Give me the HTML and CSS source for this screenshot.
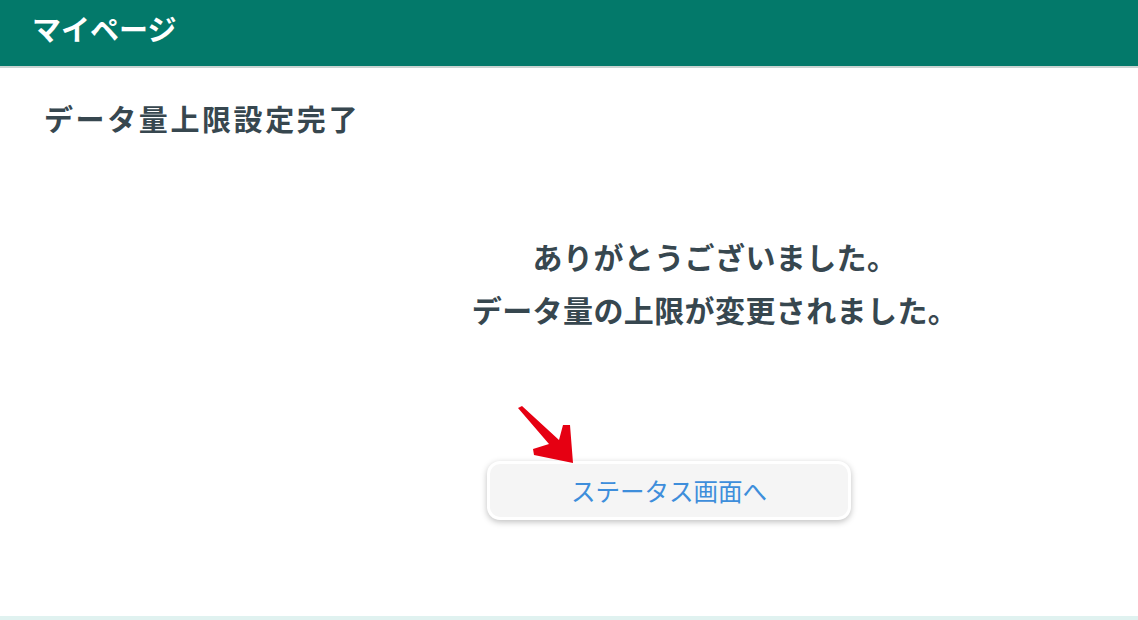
FILE: index.html
```html
<!DOCTYPE html>
<html lang="ja">
<head>
  <meta charset="utf-8">
  <title>マイページ</title>
  <link rel="stylesheet" href="styles.css">
</head>
<body>
  <header class="topbar">
    <h1 class="topbar-title">マイページ</h1>
  </header>

  <main class="page">
    <h2 class="page-title">データ量上限設定完了</h2>

    <div class="message">
      <p>ありがとうございました。</p>
      <p>データ量の上限が変更されました。</p>
    </div>

    <div class="actions">
      <div class="btn-wrap">
        <!-- red pointer arrow -->
        <svg class="pointer" width="60" height="60" viewBox="0 0 60 60">
          <polygon points="1,2 5,0 42,34 46,19 53,19 56,57 17,49 16,43 32,38" fill="#e60012"/>
        </svg>
        <a href="#" class="btn">ステータス画面へ</a>
      </div>
    </div>
  </main>

  <footer class="footer"></footer>
</body>
</html>
```

FILE: styles.css
```css
* {
  box-sizing: border-box;
  margin: 0;
  padding: 0;
}

body {
  width: 1138px;
  height: 620px;
  display: flex;
  flex-direction: column;
  font-family: "Noto Sans CJK JP", "Noto Sans", sans-serif;
  color: #37474f;
  background: #fff;
  overflow: hidden;
}

.topbar {
  height: 68px;
  background-color: #03796a;
  border-bottom: 2px solid #c9d4d2;
  padding: 0 32px;
  display: flex;
  align-items: center;
}
.topbar-title {
  color: #fff;
  font-size: 29px;
  font-weight: 700;
  line-height: 1;
  margin-top: -10px;
}

.page {
  flex: 1;
  display: flex;
  flex-direction: column;
}

.page-title {
  font-size: 29px;
  font-weight: 700;
  letter-spacing: 2.6px;
  padding: 29px 0 0 44px;
  line-height: 42px;
}

.message {
  padding: 91px 0 0 292px;
  text-align: center;
}
.message p {
  font-size: 30px;
  font-weight: 700;
  letter-spacing: 0.4px;
  line-height: 53px;
}

.actions {
  display: flex;
  justify-content: center;
  padding: 125px 0 0 200px;
}
.btn-wrap {
  position: relative;
}
.pointer {
  position: absolute;
  left: 30px;
  top: -55px;
}
.btn {
  display: block;
  width: 364px;
  height: 59px;
  line-height: 53px;
  text-align: center;
  font-size: 24.5px;
  color: #3e8edb;
  text-decoration: none;
  background: #f5f5f5;
  border: 3px solid #fff;
  border-radius: 13px;
  box-shadow: 0 2px 6px rgba(0, 0, 0, 0.25);
}

.footer {
  height: 4px;
  background: #e0f2f0;
}
```
